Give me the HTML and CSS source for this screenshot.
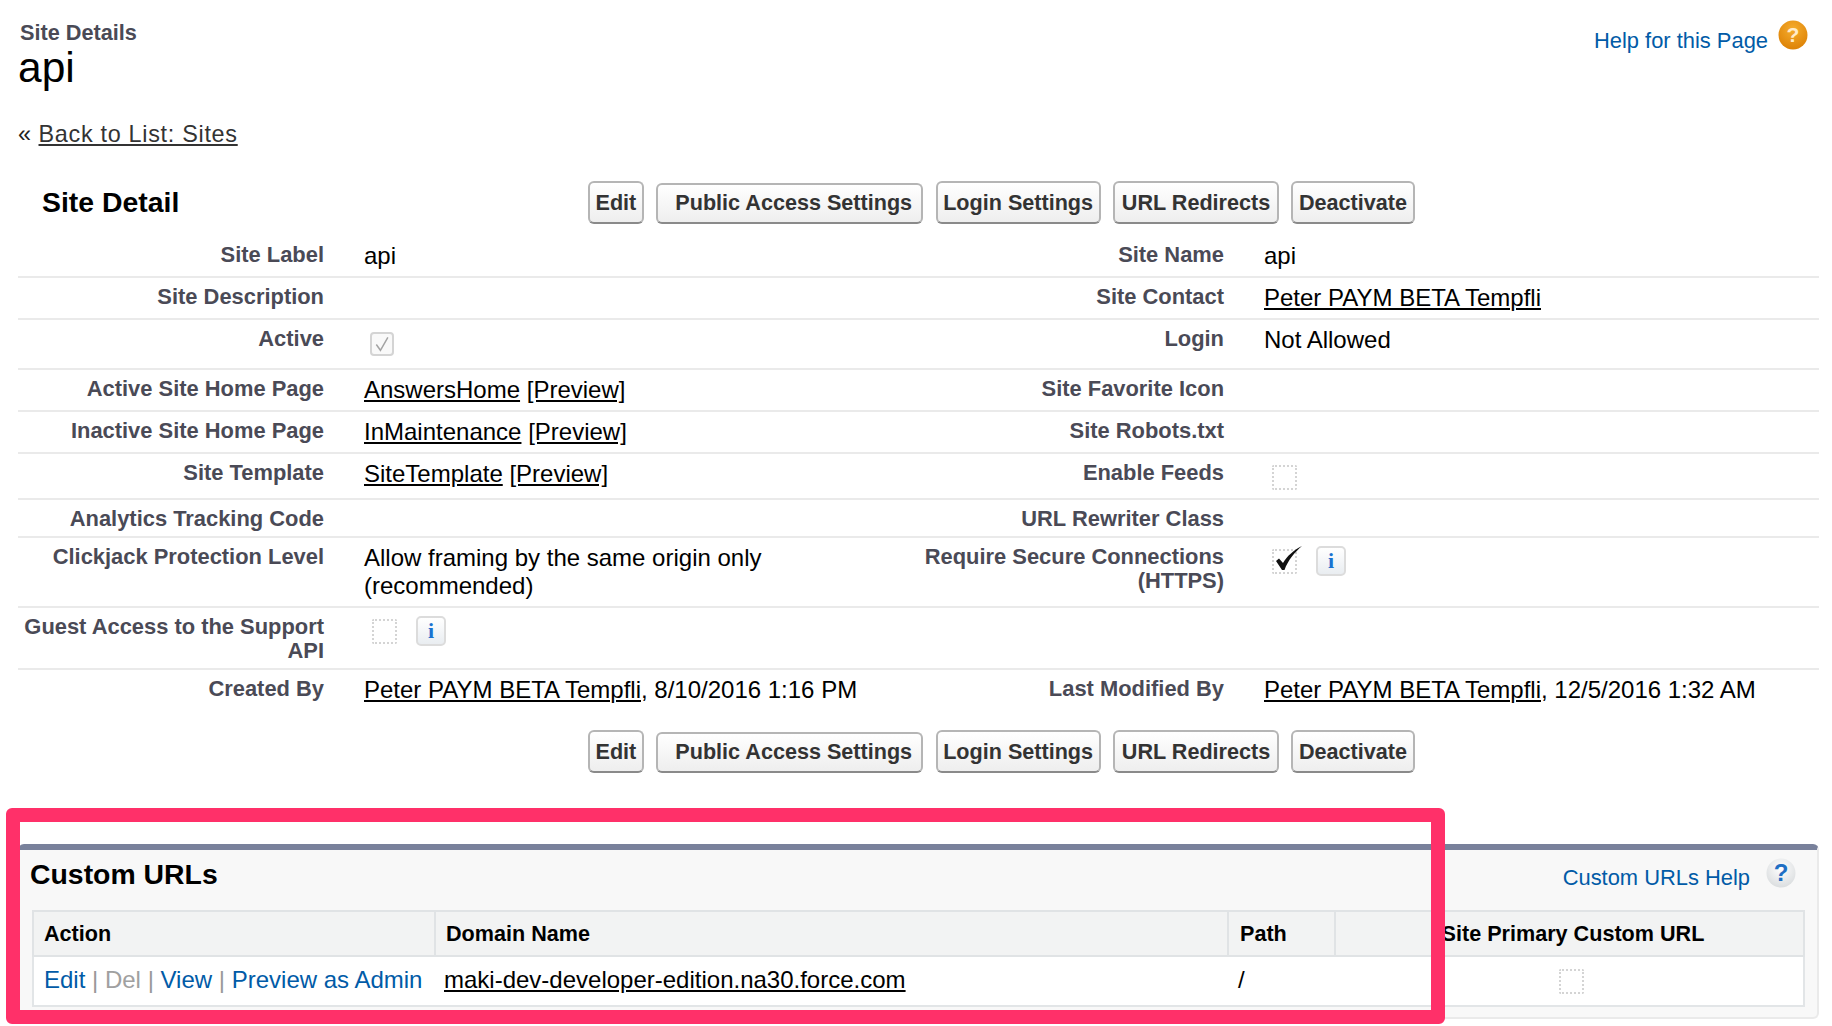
FILE: index.html
```html
<!DOCTYPE html>
<html lang="en">
<head>
<meta charset="utf-8">
<title>Site Details: api</title>
<link rel="stylesheet" href="styles.css">
</head>
<body>
<div class="page">
  <header class="head">
    <div>
      <div class="crumb">Site Details</div>
      <h1 class="title">api</h1>
    </div>
    <a class="help" href="#">
      <span>Help for this Page</span>
      <svg class="help-icon" viewBox="0 0 30 30" width="30" height="30">
        <defs>
          <radialGradient id="og" cx="50%" cy="30%" r="70%">
            <stop offset="0" stop-color="#f6ad2e"/>
            <stop offset="1" stop-color="#dd8206"/>
          </radialGradient>
        </defs>
        <circle cx="15" cy="15" r="14.5" fill="url(#og)"/>
        <text x="15" y="22" text-anchor="middle" class="help-q">?</text>
      </svg>
    </a>
  </header>
  <div class="back">« <a href="#">Back to List: Sites</a></div>

  <section class="detail">
    <div class="bar">
      <h2 class="bar-title">Site Detail</h2>
      <div class="btns">
        <button class="btn">Edit</button>
        <button class="btn btn-wide">Public Access Settings</button>
        <button class="btn">Login Settings</button>
        <button class="btn btn-url">URL Redirects</button>
        <button class="btn">Deactivate</button>
      </div>
    </div>

    <div class="row">
      <div class="lbl">Site Label</div><div class="val">api</div>
      <div class="lbl">Site Name</div><div class="val">api</div>
    </div>
    <div class="row">
      <div class="lbl">Site Description</div><div class="val"></div>
      <div class="lbl">Site Contact</div><div class="val"><a href="#">Peter PAYM BETA Tempfli</a></div>
    </div>
    <div class="row">
      <div class="lbl">Active</div>
      <div class="val"><span class="chk-on"><svg viewBox="0 0 23 23" width="19" height="19"><path d="M4 11.5 L9 18.5 L18 3" fill="none" stroke="#a3a3a3" stroke-width="1.8"/></svg></span></div>
      <div class="lbl">Login</div><div class="val">Not Allowed</div>
    </div>
    <div class="row">
      <div class="lbl">Active Site Home Page</div>
      <div class="val"><a href="#">AnswersHome</a> <a href="#">[Preview]</a></div>
      <div class="lbl">Site Favorite Icon</div><div class="val"></div>
    </div>
    <div class="row">
      <div class="lbl">Inactive Site Home Page</div>
      <div class="val"><a href="#">InMaintenance</a> <a href="#">[Preview]</a></div>
      <div class="lbl">Site Robots.txt</div><div class="val"></div>
    </div>
    <div class="row">
      <div class="lbl">Site Template</div>
      <div class="val"><a href="#">SiteTemplate</a> <a href="#">[Preview]</a></div>
      <div class="lbl">Enable Feeds</div>
      <div class="val"><span class="chk-off chk-feeds"></span></div>
    </div>
    <div class="row">
      <div class="lbl">Analytics Tracking Code</div><div class="val"></div>
      <div class="lbl">URL Rewriter Class</div><div class="val"></div>
    </div>
    <div class="row">
      <div class="lbl">Clickjack Protection Level</div>
      <div class="val">Allow framing by the same origin only (recommended)</div>
      <div class="lbl">Require Secure Connections (HTTPS)</div>
      <div class="val icons">
        <span class="chk-off chk-marked">
          <svg class="mark" viewBox="0 0 26 24" width="26" height="24"><path d="M0 15 L3 12.5 L7 17 C11 10 18 4 26 0 C19 6 12 14 8.5 24 L6 24 Z" fill="#111"/></svg>
        </span>
        <span class="info">i</span>
      </div>
    </div>
    <div class="row">
      <div class="lbl">Guest Access to the Support API</div>
      <div class="val icons">
        <span class="chk-off"></span>
        <span class="info">i</span>
      </div>
      <div class="lbl"></div><div class="val"></div>
    </div>
    <div class="row row-last">
      <div class="lbl">Created By</div>
      <div class="val"><a href="#">Peter PAYM BETA Tempfli</a>, 8/10/2016 1:16 PM</div>
      <div class="lbl">Last Modified By</div>
      <div class="val"><a href="#">Peter PAYM BETA Tempfli</a>, 12/5/2016 1:32 AM</div>
    </div>

    <div class="bar bar-bottom">
      <div class="btns">
        <button class="btn">Edit</button>
        <button class="btn btn-wide">Public Access Settings</button>
        <button class="btn">Login Settings</button>
        <button class="btn btn-url">URL Redirects</button>
        <button class="btn">Deactivate</button>
      </div>
    </div>
  </section>

  <section class="panel">
    <div class="panel-head">
      <h3 class="panel-title">Custom URLs</h3>
      <a class="panel-help" href="#">
        <span>Custom URLs Help</span>
        <svg class="panel-help-icon" viewBox="0 0 30 30" width="30" height="30">
          <defs>
            <radialGradient id="gg" cx="50%" cy="35%" r="70%">
              <stop offset="0" stop-color="#ffffff"/>
              <stop offset="1" stop-color="#d8dbdd"/>
            </radialGradient>
          </defs>
          <circle cx="15" cy="15" r="14.5" fill="url(#gg)"/>
          <text x="15" y="23" text-anchor="middle" class="panel-q">?</text>
        </svg>
      </a>
    </div>
    <table class="urls">
      <thead>
        <tr>
          <th class="c-action">Action</th>
          <th class="c-domain">Domain Name</th>
          <th class="c-path">Path</th>
          <th class="c-primary">Site Primary Custom URL</th>
        </tr>
      </thead>
      <tbody>
        <tr>
          <td class="links"><a class="blue" href="#">Edit</a> <span class="sep">|</span> <span class="del">Del</span> <span class="sep">|</span> <a class="blue" href="#">View</a> <span class="sep">|</span> <a class="blue" href="#">Preview as Admin</a></td>
          <td class="domain"><a href="#">maki-dev-developer-edition.na30.force.com</a></td>
          <td class="path">/</td>
          <td class="center"><span class="chk-off"></span></td>
        </tr>
      </tbody>
    </table>
  </section>
</div>
<div class="frame"></div>
</body>
</html>
```
FILE: styles.css
```css
* { box-sizing: border-box; }
html, body { margin: 0; padding: 0; background: #fff; }
body {
  font-family: "Liberation Sans", Arial, sans-serif;
  font-size: 24px;
  color: #000;
  width: 1832px;
  height: 1026px;
  overflow: hidden;
  position: relative;
}
.page { padding: 20px 13px 0 18px; }
a { color: #000; text-decoration: underline; }

.head { display: flex; justify-content: space-between; align-items: flex-start; }
.crumb { padding: 1px 0 0 2px; font-size: 21.7px; line-height: 24px; font-weight: 700; color: #4a4a56; }
.title { margin: 0; font-size: 42.5px; line-height: 46px; font-weight: 400; }
.help { display: flex; align-items: flex-start; gap: 10px; margin-right: 11px; color: #015ba7; text-decoration: none; font-size: 21.9px; line-height: 42px; }
.help-icon { display: block; }
.help-q { font-family: "Liberation Sans", Arial, sans-serif; font-size: 21px; font-weight: 700; fill: #ffeccb; }

.back { margin-top: 29px; font-size: 23.4px; line-height: 28px; color: #222; }
.back a { margin-left: 1px; color: #333; letter-spacing: 0.7px; }

.detail { margin-top: 33px; }
.bar { display: flex; align-items: center; }
.bar-title { margin: -2px 0 0; width: 570px; padding-left: 24px; font-size: 28.4px; line-height: 42px; font-weight: 700; }
.bar-bottom { margin-top: 20px; padding-left: 570px; }
.btns { display: flex; align-items: flex-end; gap: 12.5px; height: 43px; }
.btn {
  height: 43px;
  padding: 0 5.5px;
  border: 2px solid #b5b5b5;
  border-bottom-color: #8a8a8a;
  border-radius: 6px;
  background: linear-gradient(#ffffff, #eeeeee);
  font-family: "Liberation Sans", Arial, sans-serif;
  font-size: 21.6px;
  font-weight: 700;
  color: #333;
}
.btn-wide { height: 41px; padding: 0 9px 2px 17px; }
.btn-url { padding: 0 6.75px; }

.row {
  display: grid;
  grid-template-columns: 306px 514px 306px 1fr;
  column-gap: 40px;
  border-bottom: 2px solid #eaeaea;
}
.row-last { border-bottom: 0; }
.detail > .bar:first-child { margin-bottom: 12px; }
.lbl { padding: 7px 0 5px; font-size: 21.9px; line-height: 24px; font-weight: 700; color: #4a4a56; text-align: right; }
.val { padding: 6px 0; line-height: 28px; }

.chk-on {
  display: flex;
  align-items: center;
  justify-content: center;
  width: 24px;
  height: 24px;
  margin: 6px 0 6px 6px;
  background: #f9f9f9;
  border: 2px solid #d4d4d4;
  border-radius: 4px;
}
.chk-off {
  display: inline-block;
  width: 25px;
  height: 25px;
  border: 2px dotted #d4d4d4;
  border-radius: 2px;
  vertical-align: top;
}
.chk-feeds { margin: 5px 0 2px 8px; display: block; }
.chk-marked { position: relative; }
.mark { position: absolute; left: 2px; top: -5px; }
.icons { display: flex; align-items: flex-start; gap: 19px; padding-left: 8px; }
.icons .chk-off { margin-top: 5px; flex: none; }
.info {
  width: 30px;
  height: 30px;
  margin-top: 2px;
  border: 2px solid #dcdcdc;
  border-radius: 5px;
  background: linear-gradient(#ffffff, #e9edf1);
  font-family: "Liberation Serif", serif;
  font-size: 22px;
  line-height: 25px;
  font-weight: 700;
  color: #1a73d0;
  text-align: center;
}

.panel {
  margin-top: 71px;
  height: 175px;
  padding: 0 12px;
  background: #f8f8f8;
  border: 2px solid #eaeaea;
  border-top: 6px solid #79819b;
  border-radius: 6px;
}
.panel-head { display: flex; justify-content: space-between; align-items: flex-start; height: 60px; }
.panel-title { margin: 8px 0 0 -2px; font-size: 28.4px; line-height: 32px; font-weight: 700; }
.panel-help { display: flex; align-items: flex-start; gap: 16px; margin: 8px 9px 0 0; color: #015ba7; text-decoration: none; font-size: 21.9px; line-height: 28px; }
.panel-help span { padding-top: 6px; }
.panel-help-icon { display: block; }
.panel-q { font-family: "Liberation Sans", Arial, sans-serif; font-size: 24px; font-weight: 700; fill: #1f6fc4; }

.urls { width: 100%; border-collapse: collapse; table-layout: fixed; background: #fff; border: 2px solid #e2e5e7; }
.urls th {
  height: 45px;
  padding: 0 10px;
  background: #f2f3f3;
  border: 2px solid #e0e3e5;
  font-size: 21.6px;
  font-weight: 700;
  text-align: left;
}
.urls th.c-path { padding-left: 11px; }
.urls th.c-primary { padding-left: 17px; text-align: center; }
.urls td { height: 50px; padding: 0 10px 2px; }
.urls td.path { padding-left: 10px; }
.c-action { width: 402px; }
.c-domain { width: 793px; }
.c-path { width: 107px; }
.links { white-space: nowrap; }
.blue { color: #015ba7; text-decoration: none; }
.sep { color: #999; }
.del { color: #a0a0a0; }
.urls td.domain { padding-left: 9px; }
.urls td.center { padding-left: 14px; text-align: center; }
.center .chk-off { vertical-align: middle; }

.frame {
  position: absolute;
  left: 6px;
  top: 808px;
  width: 1439px;
  height: 216px;
  border: 14px solid #ff3069;
  border-radius: 6px;
  pointer-events: none;
}
```
